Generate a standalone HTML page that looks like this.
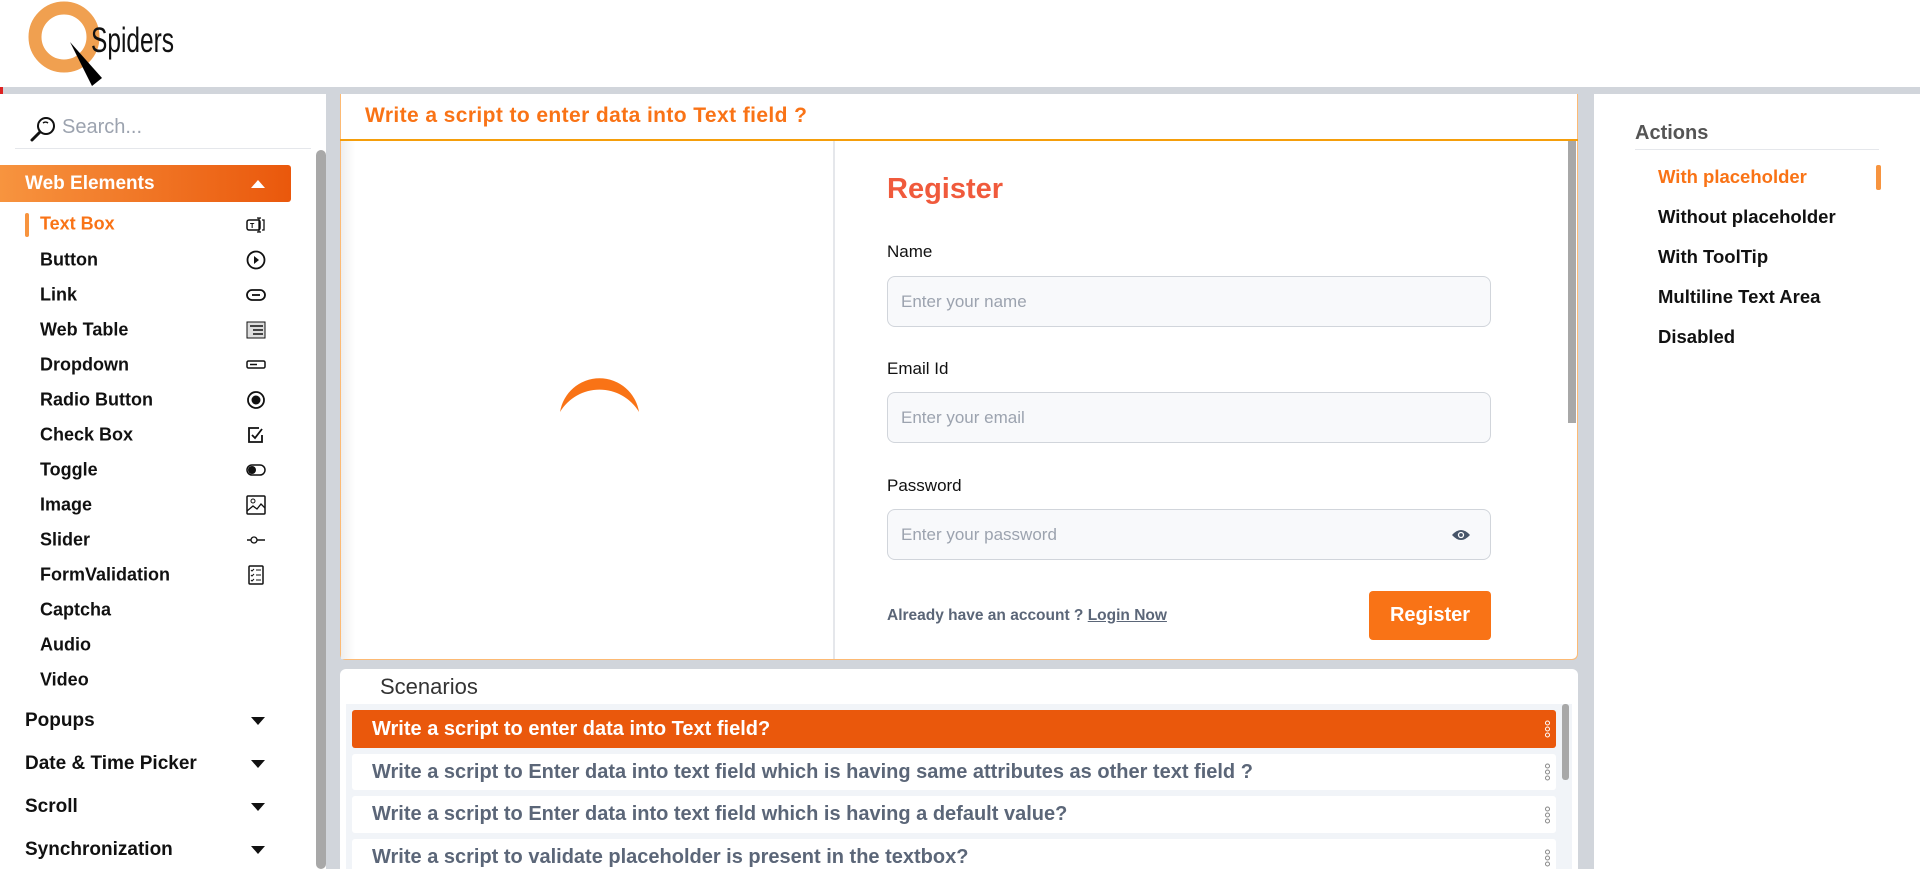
<!DOCTYPE html>
<html><head><meta charset="utf-8"><style>
*{margin:0;padding:0;box-sizing:border-box}
html{overflow:hidden;height:869px}
body{width:1920px;height:869px;overflow:hidden;background:#d1d5db;font-family:"Liberation Sans",sans-serif;position:relative}
.a{position:absolute}
.hdr{left:0;top:0;width:1920px;height:87px;background:#fff}
.side{left:0;top:94px;width:326px;height:775px;background:#fff}
.it{position:absolute;left:40px;font-size:18px;font-weight:600;color:#111;transform:translateY(-50%)}
.ic{position:absolute;left:246px;transform:translateY(-50%)}
.grp{position:absolute;left:25px;font-size:19px;font-weight:700;color:#111;transform:translateY(-50%)}
.car{position:absolute;left:251px;width:0;height:0;border-left:7px solid transparent;border-right:7px solid transparent;border-top:8px solid #111;transform:translateY(-50%)}
.lbl{position:absolute;left:887px;font-size:17px;color:#111;transform:translateY(-50%)}
.inp{position:absolute;left:887px;width:604px;height:51px;background:#f8f9fb;border:1px solid #d1d5db;border-radius:8px;font-size:17px;color:#9ca3af;padding-left:13px;line-height:49px}
.sc{position:absolute;left:12px;width:1204px;background:#fff;border-radius:3px;font-size:20px;font-weight:700;color:#5b6678;padding-left:20px;white-space:nowrap}
.dots{position:absolute;right:6px;top:50%;transform:translateY(-50%);width:5px}
.dots i{display:block;width:5px;height:5px;border:1px solid #888;border-radius:50%;margin:1px 0}
.act{position:absolute;left:1658px;font-size:18.5px;font-weight:600;color:#111;transform:translateY(-50%);white-space:nowrap}
</style></head><body>
<div class="a hdr"></div>
<svg class="a" style="left:0;top:0" width="200" height="90">
<circle cx="64" cy="37" r="29" fill="none" stroke="#f0a050" stroke-width="13"/>
<polygon points="70,42 102,78 92,86" fill="#000"/>
<text x="0" y="0" font-family="Liberation Sans" font-size="35" fill="#111" transform="translate(91,52) scale(0.7,1)">Spiders</text>
</svg>
<div class="a" style="left:0;top:87px;width:3px;height:7px;background:#d22"></div>
<div class="a side"></div>
<svg class="a" style="left:29px;top:115px" width="28" height="28" viewBox="0 0 28 28"><circle cx="17" cy="11" r="8" fill="none" stroke="#111" stroke-width="2"/><path d="M11 17 L3 25" stroke="#111" stroke-width="3" stroke-linecap="round"/><path d="M14 8 a4 4 0 0 1 5 0" stroke="#111" fill="none" stroke-width="1.5"/></svg>
<div class="a" style="left:62px;top:116px;font-size:20px;color:#9ca3af">Search...</div>
<div class="a" style="left:15px;top:148px;width:296px;height:1px;background:#e5e7eb"></div>
<div class="a" style="left:316px;top:150px;width:10px;height:719px;background:#a8a8a8;border-radius:5px"></div>
<div class="a" style="left:0;top:165px;width:291px;height:37px;background:linear-gradient(90deg,#f7943f,#ea580c);border-radius:0 3px 3px 0"></div>
<div class="a" style="left:25px;top:173px;font-size:19px;font-weight:700;color:#fff">Web Elements</div>
<div class="a" style="left:251px;top:180px;width:0;height:0;border-left:7px solid transparent;border-right:7px solid transparent;border-bottom:8px solid #fff"></div>
<div class="a" style="left:25px;top:213px;width:4px;height:24px;background:#f7943f;border-radius:2px"></div>
<div class="it" style="top:224px;color:#f97316">Text Box</div>
<div class="it" style="top:260px">Button</div>
<div class="it" style="top:295px">Link</div>
<div class="it" style="top:330px">Web Table</div>
<div class="it" style="top:365px">Dropdown</div>
<div class="it" style="top:400px">Radio Button</div>
<div class="it" style="top:435px">Check Box</div>
<div class="it" style="top:470px">Toggle</div>
<div class="it" style="top:505px">Image</div>
<div class="it" style="top:540px">Slider</div>
<div class="it" style="top:575px">FormValidation</div>
<div class="it" style="top:610px">Captcha</div>
<div class="it" style="top:645px">Audio</div>
<div class="it" style="top:680px">Video</div>
<svg class="ic" style="top:225px" width="20" height="16"><rect x="1" y="3" width="13" height="10" rx="2" fill="none" stroke="#111" stroke-width="1.5"/><text x="4" y="11" font-size="7" font-weight="bold">T</text><path d="M13 1v14M11 1h4M11 15h4M16 3h2v10h-2" stroke="#111" fill="none" stroke-width="1.3"/></svg>
<svg class="ic" style="top:260px" width="20" height="20"><circle cx="10" cy="10" r="8.5" fill="none" stroke="#111" stroke-width="1.8"/><path d="M8 6l5 4-5 4z" fill="#111"/></svg>
<svg class="ic" style="top:295px" width="20" height="14"><rect x="1" y="2" width="18" height="10" rx="5" fill="none" stroke="#111" stroke-width="1.8"/><path d="M6 7h8" stroke="#111" stroke-width="1.8"/></svg>
<svg class="ic" style="top:330px" width="20" height="18"><rect x="1" y="1" width="18" height="16" fill="#ddd" stroke="#111"/><path d="M4 5h13M7 9h10M7 13h10" stroke="#111" stroke-width="1.5"/></svg>
<svg class="ic" style="top:365px" width="20" height="10"><rect x="1" y="1" width="18" height="7" rx="1.5" fill="none" stroke="#111" stroke-width="1.5"/><path d="M4 4.5h7" stroke="#111" stroke-width="1.5"/></svg>
<svg class="ic" style="top:400px" width="20" height="20"><circle cx="10" cy="10" r="8" fill="none" stroke="#111" stroke-width="1.8"/><circle cx="10" cy="10" r="4.5" fill="#111"/></svg>
<svg class="ic" style="top:435px" width="20" height="18"><path d="M13 2H3v14h13V9" fill="none" stroke="#111" stroke-width="1.8"/><path d="M6 9l3 3 7-9" fill="none" stroke="#111" stroke-width="1.8"/></svg>
<svg class="ic" style="top:470px" width="20" height="12"><rect x="1" y="1" width="18" height="10" rx="5" fill="none" stroke="#111" stroke-width="1.5"/><circle cx="6" cy="6" r="4" fill="#111"/></svg>
<svg class="ic" style="top:505px" width="20" height="20"><rect x="1" y="1" width="18" height="18" rx="1" fill="none" stroke="#111" stroke-width="1.5"/><circle cx="7" cy="6" r="2" fill="none" stroke="#111"/><path d="M1 16l6-5 4 3 4-5 4 4" fill="none" stroke="#111" stroke-width="1.3"/></svg>
<svg class="ic" style="top:540px" width="20" height="8"><path d="M1 4h4M11 4h8" stroke="#111" stroke-width="1.5"/><circle cx="8" cy="4" r="3" fill="none" stroke="#111" stroke-width="1.3"/></svg>
<svg class="ic" style="top:575px" width="20" height="20"><rect x="3" y="1" width="14" height="18" rx="1" fill="none" stroke="#111" stroke-width="1.5"/><path d="M5 5l1 1 2-2M10 5h5M5 10l1 1 2-2M10 10h5M5 15l1 1 2-2M10 15h5" stroke="#111" fill="none"/></svg>
<div class="grp" style="top:721px">Popups</div><div class="car" style="top:721px"></div>
<div class="grp" style="top:764px">Date &amp; Time Picker</div><div class="car" style="top:764px"></div>
<div class="grp" style="top:807px">Scroll</div><div class="car" style="top:807px"></div>
<div class="grp" style="top:850px">Synchronization</div><div class="car" style="top:850px"></div>
<!-- main -->
<div class="a" style="left:340px;top:94px;width:1238px;height:566px;background:#fff;border:1px solid #fdba74;border-top:none;border-radius:0 0 6px 6px"></div>
<div class="a" style="left:340px;top:139px;width:1238px;height:2px;background:#f59e0b"></div>
<div class="a" style="left:365px;top:104px;font-size:21px;font-weight:700;color:#f97316;letter-spacing:0.4px">Write a script to enter data into Text field ?</div>
<div class="a" style="left:833px;top:141px;width:2px;height:518px;background:#e5e7eb"></div>
<div class="a" style="left:341px;top:141px;width:14px;height:518px;background:linear-gradient(90deg,#eee,#fff)"></div>
<svg class="a" style="left:555px;top:370px" width="90" height="50"><path d="M5 42 A40 40 0 0 1 84 42 A46 46 0 0 0 5 42z" fill="#f97316"/></svg>
<div class="a" style="left:1568px;top:141px;width:8px;height:282px;background:#a8a8a8"></div>
<div class="a" style="left:887px;top:173px;font-size:29px;font-weight:700;color:#f05a3c">Register</div>
<div class="lbl" style="top:252px">Name</div>
<div class="inp" style="top:276px">Enter your name</div>
<div class="lbl" style="top:369px">Email Id</div>
<div class="inp" style="top:392px">Enter your email</div>
<div class="lbl" style="top:486px">Password</div>
<div class="inp" style="top:509px">Enter your password</div>
<svg class="a" style="left:1451px;top:528px" width="20" height="14"><path d="M1 7Q10-3 19 7Q10 17 1 7z" fill="#475569"/><circle cx="10" cy="7" r="2.5" fill="none" stroke="#fff" stroke-width="1.3"/></svg>
<div class="a" style="left:887px;top:607px;font-size:15.5px;font-weight:700;color:#5b6678">Already have an account ? <span style="text-decoration:underline">Login Now</span></div>
<div class="a" style="left:1369px;top:591px;width:122px;height:49px;background:#f97316;border-radius:4px;color:#fff;font-size:20px;font-weight:700;text-align:center;line-height:49px">Register</div>
<!-- scenarios -->
<div class="a" style="left:340px;top:669px;width:1238px;height:200px;background:#fff;border-radius:6px 6px 0 0;overflow:hidden">
<div class="a" style="left:6px;top:35px;width:1226px;height:170px;background:#f1f4f8"></div>
<div class="a" style="left:40px;top:5px;font-size:22px;color:#333">Scenarios</div>
<div class="sc" style="top:41px;height:38px;line-height:38px;background:#ea580c;color:#fff">Write a script to enter data into Text field?<div class="dots"><i style="border-color:#fff"></i><i style="border-color:#fff"></i><i style="border-color:#fff"></i></div></div>
<div class="sc" style="top:85px;height:36px;line-height:36px">Write a script to Enter data into text field which is having same attributes as other text field ?<div class="dots"><i></i><i></i><i></i></div></div>
<div class="sc" style="top:127px;height:37px;line-height:37px">Write a script to Enter data into text field which is having a default value?<div class="dots"><i></i><i></i><i></i></div></div>
<div class="sc" style="top:170px;height:37px;line-height:37px">Write a script to validate placeholder is present in the textbox?<div class="dots"><i></i><i></i><i></i></div></div>
<div class="a" style="left:1222px;top:35px;width:7px;height:76px;background:#a8a8a8;border-radius:3px"></div>
</div>
<!-- right -->
<div class="a" style="left:1594px;top:94px;width:326px;height:775px;background:#fff"></div>
<div class="a" style="left:1635px;top:122px;font-size:20px;font-weight:600;color:#555">Actions</div>
<div class="a" style="left:1635px;top:149px;width:244px;height:1px;background:#e5e7eb"></div>
<div class="act" style="top:177px;color:#f97316">With placeholder</div>
<div class="a" style="left:1876px;top:165px;width:5px;height:25px;background:#f7943f;border-radius:2px"></div>
<div class="act" style="top:217px">Without placeholder</div>
<div class="act" style="top:257px">With ToolTip</div>
<div class="act" style="top:297px">Multiline Text Area</div>
<div class="act" style="top:337px">Disabled</div>
</body></html>
